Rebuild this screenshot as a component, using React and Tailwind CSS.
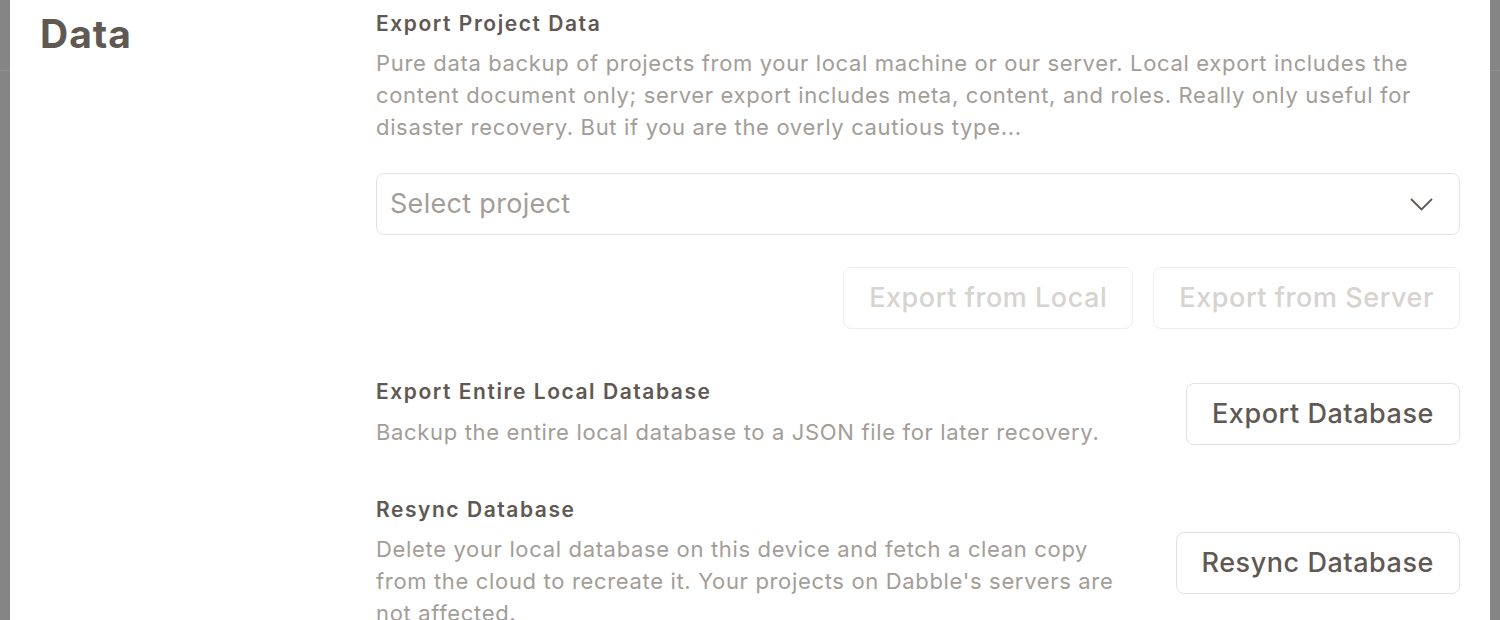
import React from "react";

function Strip() {
  return (
    <div className="w-[10px] flex flex-col bg-[#858585]">
      <div className="h-[70px]" />
      <div className="h-px bg-[#909090]" />
    </div>
  );
}

const H3 = "text-[21px] font-semibold leading-[32px] tracking-[1.55px] text-[#5f5853]";
const P = "text-[22px] leading-[32px] tracking-[0.66px] text-[#a39d98]";
const BTN = "h-[62px] shrink-0 rounded-[8px] border px-[25px] text-[27px] font-medium tracking-[0.55px]";

export default function App() {
  const font = { fontFamily: "Inter, 'Noto Sans', sans-serif" };
  return (
    <div className="flex h-[620px] w-[1500px] overflow-hidden bg-[#858585]" style={font}>
      <Strip />
      <div className="flex flex-1 bg-white px-[30px]">
        <div className="w-[336px] shrink-0 pt-[12px]">
          <h2 className="text-[39px] font-bold leading-[44px] tracking-[1px] text-[#5f5853]">Data</h2>
        </div>
        <div className="flex-1 pt-[8px]">
          <h3 className={H3}>Export Project Data</h3>
          <p className={"mt-[7px] " + P}>
            Pure data backup of projects from your local machine or our server. Local export includes the
            content document only; server export includes meta, content, and roles. Really only useful for
            disaster recovery. But if you are the overly cautious type...
          </p>
          <div className="mt-[30px] flex h-[62px] items-center justify-between rounded-[8px] border border-[#e6e2de] pl-[13px] pr-[26px]">
            <span className="text-[27px] tracking-[0.3px] text-[#a39d98]">Select project</span>
            <svg width="23" height="13" viewBox="0 0 23 13" fill="none" stroke="#5f5853" strokeWidth="1.8">
              <path d="M1 1l10.5 10.5L22 1" />
            </svg>
          </div>
          <div className="mt-[32px] flex justify-end gap-[20px]">
            <button className={BTN + " border-[#efedeb] text-[#d6d3d0]"}>Export from Local</button>
            <button className={BTN + " border-[#efedeb] text-[#d6d3d0]"}>Export from Server</button>
          </div>
          <div className="mt-[47px] flex items-start gap-[40px]">
            <div className="flex-1">
              <h3 className={H3}>Export Entire Local Database</h3>
              <p className={"mt-[8px] " + P}>
                Backup the entire local database to a JSON file for later recovery.
              </p>
            </div>
            <button className={BTN + " mt-[7px] border-[#e6e2de] text-[#5f5853]"}>Export Database</button>
          </div>
          <div className="mt-[46px] flex items-start gap-[40px]">
            <div className="flex-1">
              <h3 className={H3}>Resync Database</h3>
              <p className={"mt-[7px] " + P}>
                Delete your local database on this device and fetch a clean copy from the cloud to recreate it. Your projects on Dabble's servers are not affected.
              </p>
            </div>
            <button className={BTN + " mt-[38px] border-[#e6e2de] text-[#5f5853]"}>Resync Database</button>
          </div>
        </div>
      </div>
      <Strip />
    </div>
  );
}
